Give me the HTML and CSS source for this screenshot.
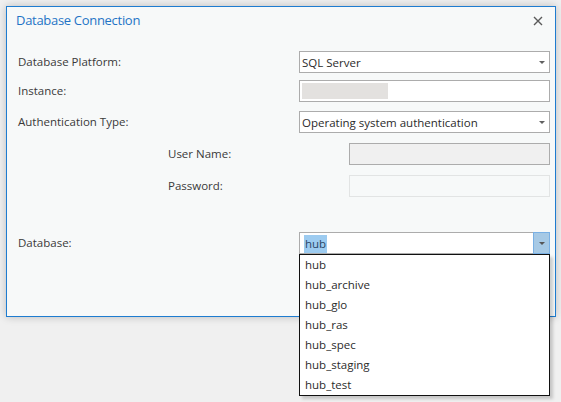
FILE: index.html
```html
<!DOCTYPE html>
<html>
<head>
<meta charset="utf-8">
<link rel="stylesheet" href="styles.css">
</head>
<body>
<div class="dialog">
  <div class="titlebar">
    <span class="title">Database Connection</span>
    <svg class="close" width="10" height="10" viewBox="0 0 10 10"><path d="M1 1 L9 9 M9 1 L1 9" stroke="#5a5a5a" stroke-width="1.4" fill="none"/></svg>
  </div>
  <div class="form">
    <div class="row r1">
      <span class="label">Database Platform:</span>
      <div class="combo"><span class="val">SQL Server</span><span class="arrow"></span></div>
    </div>
    <div class="row r2">
      <span class="label">Instance:</span>
      <div class="textbox"><span class="blur"></span></div>
    </div>
    <div class="row r3">
      <span class="label">Authentication Type:</span>
      <div class="combo"><span class="val">Operating system authentication</span><span class="arrow"></span></div>
    </div>
    <div class="row sub r4">
      <span class="label">User Name:</span>
      <div class="textbox disabled"></div>
    </div>
    <div class="row sub r5">
      <span class="label">Password:</span>
      <div class="textbox faint"></div>
    </div>
    <div class="row r6">
      <span class="label">Database:</span>
      <div class="combo open">
        <span class="val"><span class="sel">hub</span></span>
        <span class="btn"><span class="arrow"></span></span>
        <ul class="list">
          <li>hub</li>
          <li>hub_archive</li>
          <li>hub_glo</li>
          <li>hub_ras</li>
          <li>hub_spec</li>
          <li>hub_staging</li>
          <li>hub_test</li>
        </ul>
      </div>
    </div>
  </div>
</div>
</body>
</html>
```

FILE: styles.css
```css
html, body {
  margin: 0;
  padding: 0;
  background: #f0f0f0;
  font-family: "Open Sans", "Noto Sans", sans-serif;
  width: 561px;
  height: 402px;
  overflow: hidden;
}
.dialog {
  margin: 6px 0 0 6px;
  width: 548px;
  height: 309px;
  background: #f7f9f9;
  border: 1px solid #1e7cd0;
  box-shadow: 0 0 8px rgba(0,0,0,0.22);
  box-sizing: content-box;
}
.titlebar {
  height: 26px;
  display: flex;
  align-items: center;
  justify-content: space-between;
  padding: 0 12px 0 9px;
}
.title {
  color: #1f74c6;
  font-size: 13px;
  letter-spacing: -0.3px;
}
.close {
  display: block;
  margin-top: 1px;
}
.form {
  padding: 18px 5px 0 11px;
  display: flex;
  flex-direction: column;
}
.row {
  display: flex;
  align-items: center;
  height: 22px;
  font-size: 11.5px;
  color: #3a3a3a;
}
.row .label {
  flex: 0 0 281px;
  margin-top: -1px;
}
.row.sub {
  padding-left: 150px;
}
.row.sub .label {
  flex: 0 0 181px;
}
.r2 { margin-top: 7px; }
.r3 { margin-top: 9px; }
.r4 { margin-top: 10px; }
.r5 { margin-top: 10px; }
.r6 { margin-top: 35px; }
.combo, .textbox {
  position: relative;
  flex: 1;
  height: 22px;
  box-sizing: border-box;
  border: 1px solid #acacac;
  background: #fff;
  display: flex;
  align-items: center;
}
.val {
  padding-left: 2px;
  flex: 1;
  color: #2b2b2b;
}
.arrow {
  width: 0;
  height: 0;
  border-left: 3px solid transparent;
  border-right: 3px solid transparent;
  border-top: 3px solid #606060;
  margin-right: 4px;
}
.textbox.disabled {
  background: #f0f0f0;
}
.textbox.faint {
  background: #f7f9f9;
  border-color: #e2e4e4;
}
.blur {
  display: block;
  margin-left: 2px;
  width: 86px;
  height: 16px;
  background: #e3e1df;
}
.sel {
  background: #9ccbf0;
  color: #2a4565;
  padding: 1px 1px 2px 1px;
  margin-left: 3px;
}
.combo.open .val {
  padding-left: 1px;
}
.btn {
  align-self: stretch;
  width: 15px;
  margin: -1px -1px -1px 0;
  background: #a6c9e5;
  border: 1px solid #79b0e4;
  display: flex;
  align-items: center;
  justify-content: center;
}
.btn .arrow {
  margin-right: 0;
  border-top-color: #555;
}
.list {
  position: absolute;
  left: -1px;
  right: -1px;
  top: 21px;
  margin: 0;
  padding: 0;
  list-style: none;
  background: #fff;
  border: 1px solid #111;
  box-shadow: 3px 3px 3px rgba(0,0,0,0.18);
}
.list li {
  height: 20px;
  line-height: 20px;
  padding-left: 5px;
  font-size: 11.5px;
  color: #2b2b2b;
}
```
